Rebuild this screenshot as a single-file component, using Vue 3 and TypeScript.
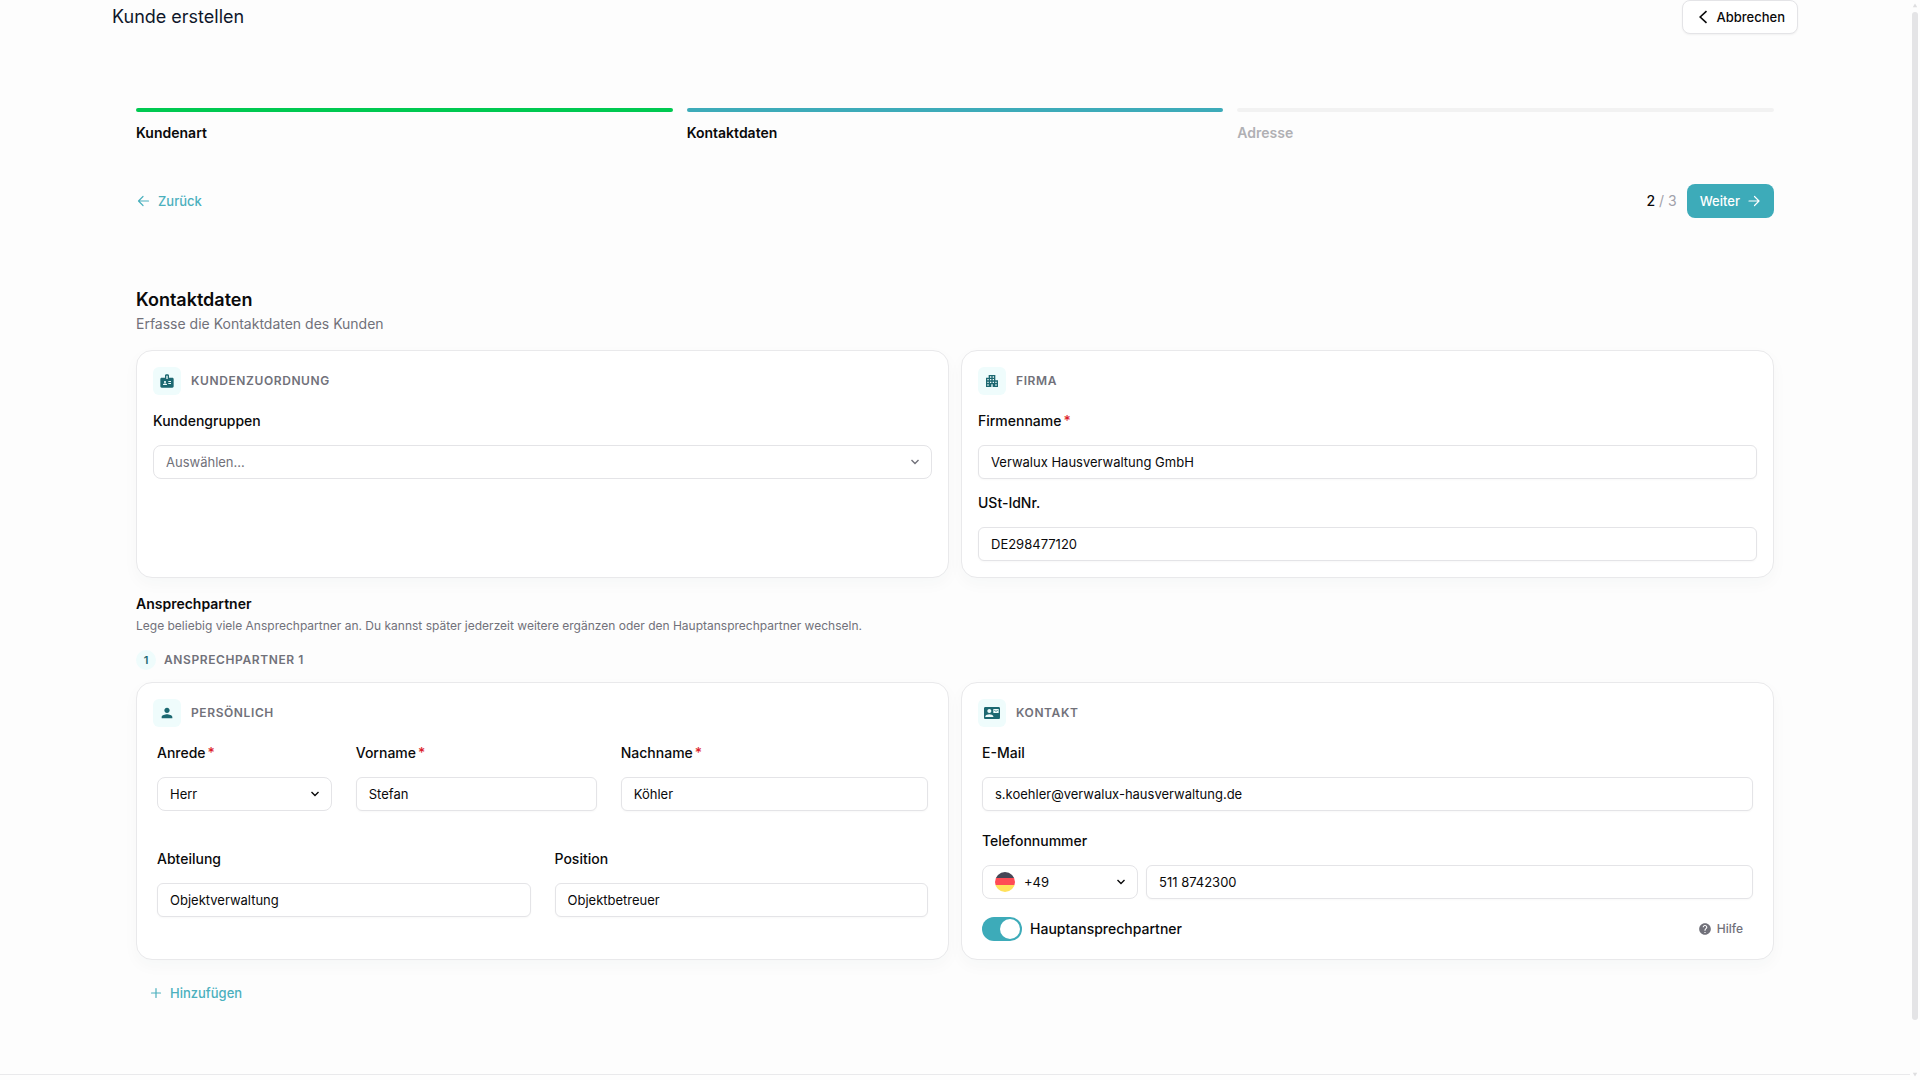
<script setup lang="ts">
import { ref } from 'vue'

type StepState = 'done' | 'active' | 'open'

interface Step {
  label: string
  state: StepState
}

const steps: Step[] = [
  { label: 'Kundenart', state: 'done' },
  { label: 'Kontaktdaten', state: 'active' },
  { label: 'Adresse', state: 'open' },
]

const icons = {
  badge:
    'M20 7h-5V4c0-1.1-.9-2-2-2h-2c-1.1 0-2 .9-2 2v3H4c-1.1 0-2 .9-2 2v11c0 1.1.9 2 2 2h16c1.1 0 2-.9 2-2V9c0-1.1-.9-2-2-2zM9 12c.83 0 1.5.67 1.5 1.5S9.83 15 9 15s-1.5-.67-1.5-1.5S8.17 12 9 12zm3 6H6v-.75c0-1 2-1.5 3-1.5s3 .5 3 1.5V18zm1-9h-2V4h2v5zm5 7.5h-4V15h4v1.5zm0-3h-4V12h4v1.5z',
  building:
    'M17 11V3H7v4H3v14h8v-4h2v4h8V11h-4zM7 19H5v-2h2v2zm0-4H5v-2h2v2zm0-4H5V9h2v2zm4 4H9v-2h2v2zm0-4H9V9h2v2zm0-4H9V5h2v2zm4 8h-2v-2h2v2zm0-4h-2V9h2v2zm0-4h-2V5h2v2zm4 12h-2v-2h2v2zm0-4h-2v-2h2v2z',
  person:
    'M12 12c2.21 0 4-1.79 4-4s-1.79-4-4-4-4 1.79-4 4 1.79 4 4 4zm0 2c-2.67 0-8 1.34-8 4v2h16v-2c0-2.66-5.33-4-8-4z',
  contact:
    'M21 8V7l-3 2-3-2v1l3 2 3-2zm1-5H2C.9 3 0 3.9 0 5v14c0 1.1.9 2 2 2h20c1.1 0 1.99-.9 1.99-2L24 5c0-1.1-.9-2-2-2zM8 6c1.66 0 3 1.34 3 3s-1.34 3-3 3-3-1.34-3-3 1.34-3 3-3zm6 12H2v-1c0-2 4-3.1 6-3.1s6 1.1 6 3.1v1zm8-6h-8V6h8v6z',
  help: 'M12 2C6.48 2 2 6.48 2 12s4.48 10 10 10 10-4.48 10-10S17.52 2 12 2zm1 17h-2v-2h2v2zm2.07-7.75l-.9.92C13.45 12.9 13 13.5 13 15h-2v-.5c0-1.1.45-2.1 1.17-2.83l1.24-1.26c.37-.36.59-.86.59-1.41 0-1.1-.9-2-2-2s-2 .9-2 2H8c0-2.21 1.79-4 4-4s4 1.79 4 4c0 .88-.36 1.68-.93 2.25z',
}

const group = ref('')
const company = ref('Verwalux Hausverwaltung GmbH')
const vatId = ref('DE298477120')
const salutation = ref('Herr')
const firstName = ref('Stefan')
const lastName = ref('Köhler')
const department = ref('Objektverwaltung')
const position = ref('Objektbetreuer')
const email = ref('s.koehler@verwalux-hausverwaltung.de')
const dialCode = ref('+49')
const phone = ref('511 8742300')
const isPrimary = ref(true)
</script>

<template>
  <div class="page">
    <div class="content">
      <header class="topbar">
        <h1 class="topbar-title">Kunde erstellen</h1>
        <button type="button" class="btn btn-outline">
          <svg class="icon-14" viewBox="0 0 14 14" fill="none" stroke="currentColor" stroke-width="1.6">
            <path d="M11.5 1.2 5.2 7l6.3 5.8" />
          </svg>
          Abbrechen
        </button>
      </header>

      <main class="wizard">
        <ol class="steps">
          <li v-for="step in steps" :key="step.label" class="step" :class="step.state">
            <span class="step-bar"></span>
            <span class="step-label">{{ step.label }}</span>
          </li>
        </ol>

        <nav class="wizard-nav">
          <button type="button" class="btn btn-link btn-back">
            <svg class="icon-14" viewBox="0 0 14 14" fill="none" stroke="currentColor" stroke-width="1.2" stroke-linecap="round" stroke-linejoin="round">
              <path d="M11.5 7H1.5M6 2.5 1.5 7 6 11.5" />
            </svg>
            Zurück
          </button>
          <div class="nav-right">
            <span class="counter"><b>2</b> / 3</span>
            <button type="button" class="btn btn-primary">
              Weiter
              <svg class="icon-14" viewBox="0 0 14 14" fill="none" stroke="currentColor" stroke-width="1.2" stroke-linecap="round" stroke-linejoin="round">
                <path d="M2 7h10M7.5 2.5 12 7l-4.5 4.5" />
              </svg>
            </button>
          </div>
        </nav>

        <h2 class="section-title">Kontaktdaten</h2>
        <p class="section-sub">Erfasse die Kontaktdaten des Kunden</p>

        <div class="cards">
          <section class="card">
            <h3 class="card-head">
              <span class="card-icon"><svg class="icon-16" viewBox="0 0 24 24"><path :d="icons.badge" /></svg></span>
              Kundenzuordnung
            </h3>
            <div class="field">
              <label for="group">Kundengruppen</label>
              <div class="select">
                <select id="group" v-model="group" class="control placeholder">
                  <option value="">Auswählen...</option>
                </select>
                <svg class="chevron muted" viewBox="0 0 14 14"><path d="m3.5 5 3.5 3.5L10.5 5" /></svg>
              </div>
            </div>
          </section>

          <section class="card">
            <h3 class="card-head">
              <span class="card-icon"><svg class="icon-16" viewBox="0 0 24 24"><path :d="icons.building" /></svg></span>
              Firma
            </h3>
            <div class="stack">
              <div class="field">
                <label for="company">Firmenname<span class="required">*</span></label>
                <input id="company" v-model="company" class="control" type="text" />
              </div>
              <div class="field">
                <label for="vat">USt-IdNr.</label>
                <input id="vat" v-model="vatId" class="control" type="text" />
              </div>
            </div>
          </section>
        </div>

        <h3 class="group-title">Ansprechpartner</h3>
        <p class="group-sub">
          Lege beliebig viele Ansprechpartner an. Du kannst später jederzeit weitere ergänzen oder den
          Hauptansprechpartner wechseln.
        </p>

        <h4 class="person-head"><span class="person-index">1</span>Ansprechpartner 1</h4>

        <div class="cards">
          <section class="card">
            <h3 class="card-head">
              <span class="card-icon"><svg class="icon-16" viewBox="0 0 24 24"><path :d="icons.person" /></svg></span>
              Persönlich
            </h3>
            <div class="grid inset">
              <div class="field span-3">
                <label for="salutation">Anrede<span class="required">*</span></label>
                <div class="select">
                  <select id="salutation" v-model="salutation" class="control">
                    <option>Herr</option>
                    <option>Frau</option>
                  </select>
                  <svg class="chevron" viewBox="0 0 14 14"><path d="m3.5 5 3.5 3.5L10.5 5" /></svg>
                </div>
              </div>
              <div class="field span-4">
                <label for="first">Vorname<span class="required">*</span></label>
                <input id="first" v-model="firstName" class="control" type="text" />
              </div>
              <div class="field span-5">
                <label for="last">Nachname<span class="required">*</span></label>
                <input id="last" v-model="lastName" class="control" type="text" />
              </div>
              <div class="field span-6">
                <label for="department">Abteilung</label>
                <input id="department" v-model="department" class="control" type="text" />
              </div>
              <div class="field span-6">
                <label for="position">Position</label>
                <input id="position" v-model="position" class="control" type="text" />
              </div>
            </div>
          </section>

          <section class="card">
            <h3 class="card-head">
              <span class="card-icon"><svg class="icon-16" viewBox="0 0 24 24"><path :d="icons.contact" /></svg></span>
              Kontakt
            </h3>
            <div class="contact inset">
              <div class="field">
                <label for="email">E-Mail</label>
                <input id="email" v-model="email" class="control" type="email" />
              </div>
              <div class="field">
                <label for="phone">Telefonnummer</label>
                <div class="phone">
                  <div class="select dial">
                    <svg class="flag" viewBox="0 0 20 20">
                      <clipPath id="flag-clip"><circle cx="10" cy="10" r="10" /></clipPath>
                      <g clip-path="url(#flag-clip)">
                        <path fill="#464655" d="M0 0h20v6H0z" />
                        <path fill="#ff4b55" d="M0 6h20v7H0z" />
                        <path fill="#ffe15a" d="M0 13h20v7H0z" />
                      </g>
                    </svg>
                    <select v-model="dialCode" class="control" aria-label="Ländervorwahl">
                      <option>+49</option>
                    </select>
                    <svg class="chevron" viewBox="0 0 14 14"><path d="m3.5 5 3.5 3.5L10.5 5" /></svg>
                  </div>
                  <input id="phone" v-model="phone" class="control" type="tel" />
                </div>
              </div>
              <div class="primary-row">
                <label class="switch-label">
                  <input v-model="isPrimary" type="checkbox" role="switch" class="switch" />
                  Hauptansprechpartner
                </label>
                <button type="button" class="btn help">
                  <svg class="icon-14" viewBox="0 0 24 24"><path fill="currentColor" :d="icons.help" /></svg>
                  Hilfe
                </button>
              </div>
            </div>
          </section>
        </div>

        <button type="button" class="btn btn-link btn-add">
          <svg class="icon-14" viewBox="0 0 14 14" fill="none" stroke="currentColor" stroke-width="1.2" stroke-linecap="round">
            <path d="M7 2.5v9M2.5 7h9" />
          </svg>
          Hinzufügen
        </button>
      </main>

      <footer class="footer"></footer>
    </div>

    <div class="scrollbar" aria-hidden="true">
      <svg viewBox="0 0 8 8"><path d="M4 2 7 7H1z" /></svg>
      <div class="track"><div class="thumb"></div></div>
      <svg viewBox="0 0 8 8"><path d="M4 6 7 1H1z" /></svg>
    </div>
  </div>
</template>

<style>
body {
  margin: 0;
  background: #fdfdfd;
}
</style>

<style scoped>
.page {
  --teal: #3dabb9;
  --teal-link: #4bb0bd;
  --teal-dark: #1c6871;
  --tint: #effcfc;
  --ink: #0a0a0b;
  --muted: #71717a;
  --line: #e4e4e7;
  display: flex;
  min-height: 100vh;
  font-family: Inter, 'Liberation Sans', sans-serif;
  font-size: 14px;
  line-height: 20px;
  color: var(--ink);
}
.page *,
.page *::before {
  box-sizing: border-box;
}
h1,
h2,
h3,
h4,
p,
ol {
  margin: 0;
  padding: 0;
}
.content {
  flex: 1;
  min-width: 0;
  display: flex;
  flex-direction: column;
}

.topbar {
  display: flex;
  align-items: center;
  justify-content: space-between;
  margin: 0 112px 74px;
}
.topbar-title {
  font-size: 18px;
  line-height: 28px;
  font-weight: 400;
  color: #0f172a;
}

.btn {
  display: inline-flex;
  align-items: center;
  gap: 7px;
  height: 34px;
  border: 0;
  border-radius: 8px;
  background: none;
  font-family: inherit;
  font-size: 13px;
  font-weight: 500;
  line-height: 20px;
  color: var(--ink);
  cursor: pointer;
}
.btn-outline {
  padding: 0 12px;
  gap: 8px;
  border: 1px solid var(--line);
  background: #fff;
  box-shadow: 0 1px 2px rgba(0, 0, 0, 0.05);
}
.btn-primary {
  padding: 0 13px;
  background: var(--teal);
  color: #fff;
}
.btn-link {
  color: var(--teal-link);
}
.btn-back {
  padding: 0 1px;
}
.btn-add {
  margin-top: 16px;
  padding: 0 13px;
}
.icon-14 {
  width: 14px;
  height: 14px;
}
.icon-16 {
  width: 16px;
  height: 16px;
}

.wizard {
  flex: 1;
  margin: 0 136px;
}
.steps {
  display: flex;
  gap: 14px;
  list-style: none;
}
.step {
  flex: 1;
  display: flex;
  flex-direction: column;
  gap: 11px;
  font-weight: 600;
}
.step-bar {
  height: 4px;
  border-radius: 2px;
  background: #f2f2f2;
}
.step.done .step-bar {
  background: #00c951;
}
.step.active .step-bar {
  background: var(--teal);
}
.step.open {
  color: #b0b0b4;
}

.wizard-nav {
  display: flex;
  align-items: center;
  justify-content: space-between;
  margin: 41px 0 68px;
}
.nav-right {
  display: flex;
  align-items: center;
  gap: 10px;
}
.counter {
  color: #a1a1aa;
}
.counter b {
  font-weight: 500;
  color: var(--ink);
}

.section-title {
  font-size: 18px;
  line-height: 28px;
  font-weight: 600;
}
.section-sub {
  color: var(--muted);
}

.cards {
  display: grid;
  grid-template-columns: repeat(2, minmax(0, 1fr));
  gap: 12px;
}
.section-sub + .cards {
  margin: 16px 0;
}
.card {
  padding: 16px;
  border: 1px solid #e9e9eb;
  border-radius: 16px;
  background: #fff;
  box-shadow: 0 6px 16px rgba(20, 60, 60, 0.03);
}
.card-head,
.person-head {
  display: flex;
  align-items: center;
  font-size: 12px;
  line-height: 16px;
  font-weight: 600;
  letter-spacing: 0.05em;
  text-transform: uppercase;
  color: var(--muted);
}
.card-head {
  gap: 10px;
  margin-bottom: 16px;
}
.card-icon {
  display: grid;
  place-items: center;
  width: 28px;
  height: 28px;
  border-radius: 6px;
  background: var(--tint);
  fill: var(--teal-dark);
}
.person-head {
  gap: 8px;
  margin: 16px 0 12px;
}
.person-index {
  display: grid;
  place-items: center;
  width: 20px;
  height: 20px;
  border-radius: 50%;
  background: var(--tint);
  font-size: 11px;
  letter-spacing: 0;
  color: var(--teal-dark);
}

.group-title {
  font-size: 14px;
  line-height: 20px;
  font-weight: 600;
}
.group-sub {
  margin-top: 4px;
  font-size: 12px;
  line-height: 16px;
  color: var(--muted);
}

.stack {
  display: grid;
  gap: 14px;
}
.inset {
  padding: 0 4px 4px;
}
.grid {
  display: grid;
  grid-template-columns: repeat(12, minmax(0, 1fr));
  align-content: start;
  gap: 38px 24px;
}
.span-3 {
  grid-column: span 3;
}
.span-4 {
  grid-column: span 4;
}
.span-5 {
  grid-column: span 5;
}
.span-6 {
  grid-column: span 6;
}
.field {
  display: flex;
  flex-direction: column;
  gap: 14px;
  font-weight: 500;
}
.required {
  margin-left: 2px;
  color: #dc1f2e;
}
.control {
  width: 100%;
  height: 34px;
  padding: 0 12px;
  border: 1px solid var(--line);
  border-radius: 6px;
  background: #fff;
  box-shadow: 0 1px 2px rgba(0, 0, 0, 0.03);
  font-family: inherit;
  font-size: 13px;
  font-weight: 400;
  color: var(--ink);
  appearance: none;
}
.select {
  position: relative;
}
.select .control {
  border-radius: 8px;
  box-shadow: none;
}
.select .placeholder {
  color: var(--muted);
}
.chevron {
  position: absolute;
  top: 10px;
  right: 10px;
  width: 14px;
  height: 14px;
  fill: none;
  stroke: var(--ink);
  stroke-width: 1.4;
  pointer-events: none;
}
.chevron.muted {
  stroke: var(--muted);
}

.contact {
  display: grid;
  gap: 20px;
}
.phone {
  display: flex;
  gap: 8px;
}
.dial {
  flex: 0 0 156px;
}
.dial .control {
  padding-left: 41px;
}
.flag {
  position: absolute;
  top: 7px;
  left: 13px;
  width: 20px;
  height: 20px;
  pointer-events: none;
}
.primary-row {
  display: flex;
  align-items: center;
  justify-content: space-between;
  height: 20px;
}
.switch-label {
  display: flex;
  align-items: center;
  gap: 8px;
  font-weight: 500;
}
.switch {
  width: 40px;
  height: 24px;
  margin: 0;
  padding: 2px;
  border-radius: 12px;
  background: #d4d4d8;
  appearance: none;
}
.switch::before {
  content: '';
  display: block;
  width: 20px;
  height: 20px;
  border-radius: 50%;
  background: #fff;
}
.switch:checked {
  background: var(--teal);
}
.switch:checked::before {
  margin-left: auto;
}
.help {
  gap: 5px;
  padding: 0 10px;
  font-size: 12px;
  color: var(--muted);
}

.footer {
  height: 6px;
  border-top: 1px solid #e9e9eb;
}

.scrollbar {
  display: flex;
  flex-direction: column;
  width: 10px;
  padding: 1px 2px;
  fill: #dedee0;
}
.scrollbar svg {
  width: 6px;
  height: 8px;
}
.track {
  flex: 1;
  display: flex;
  padding: 3px 0 51px;
}
.thumb {
  flex: 1;
  border-radius: 3px;
  background: #e4e4e6;
}
</style>
